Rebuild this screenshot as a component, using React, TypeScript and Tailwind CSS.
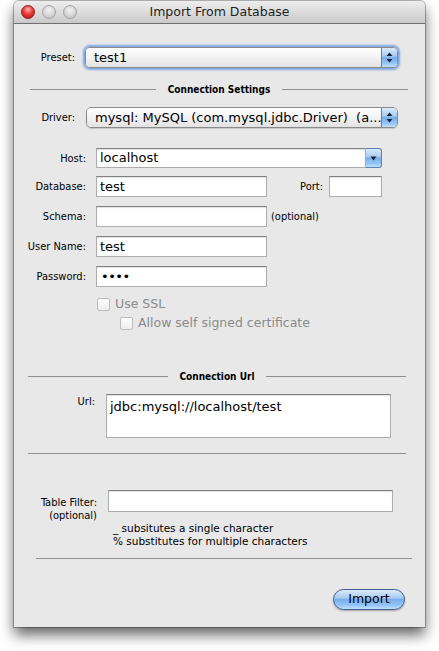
import React from "react";

// Aqua-ish blue used by popup arrows, combo button and the default button.
const AQUA =
  "bg-[linear-gradient(to_bottom,#dceafa_0%,#a9cbf1_42%,#7aaeea_50%,#94c4f6_80%,#c2e1fd_100%)]";

const LABEL = "font-['DejaVu_Sans_Condensed','DejaVu_Sans',sans-serif] text-[11px] leading-[13px] text-black";
const FIELD =
  "h-[21px] border border-[#adadad] border-t-[#808080] bg-white shadow-[inset_0_1px_1px_rgba(0,0,0,0.12)] px-[3px] text-[13px] leading-[19px] text-black";

function UpDown() {
  return (
    <svg width="7" height="11" viewBox="0 0 7 11">
      <path d="M3.5 0.5 L6.5 4 L0.5 4 Z" fill="#16233b" />
      <path d="M0.5 7 L6.5 7 L3.5 10.5 Z" fill="#16233b" />
    </svg>
  );
}

function Popup({ text, focused, width }: { text: string; focused?: boolean; width: string }) {
  return (
    <div
      className={`flex h-[21px] ${width} overflow-hidden rounded-[5px] border border-[#8a8a8a] ${
        focused ? "shadow-[0_0_2px_2px_rgba(92,146,222,0.75)] border-[#5d84bb]" : "shadow-[0_1px_1px_rgba(0,0,0,0.15)]"
      }`}
    >
      <div className="flex min-w-0 flex-1 items-center bg-gradient-to-b from-white via-[#f3f3f3] to-[#e2e2e2] pl-[8px] text-[13px] whitespace-pre text-black">
        <span className="overflow-hidden">{text}</span>
      </div>
      <div className={`flex w-[16px] items-center justify-center border-l border-[#5a7fb5] ${AQUA}`}>
        <UpDown />
      </div>
    </div>
  );
}

function SectionHeader({ title, className }: { title: string; className: string }) {
  return (
    <div className={`flex h-[14px] items-center ${className}`}>
      <div className="h-px flex-1 bg-[#8e8e8e]" />
      <span className="px-[12px] font-['DejaVu_Sans_Condensed','DejaVu_Sans',sans-serif] text-[10px] font-bold text-black">
        {title}
      </span>
      <div className="h-px flex-1 bg-[#8e8e8e]" />
    </div>
  );
}

function Check({ label, indent }: { label: string; indent: string }) {
  return (
    <div className={`flex h-[16px] items-center gap-[5px] ${indent}`}>
      <span className="h-[13px] w-[13px] rounded-[2px] border border-[#bdbdbd] bg-gradient-to-b from-white to-[#ededed]" />
      <span className="text-[12.5px] text-[#8a8a8a]">{label}</span>
    </div>
  );
}

function Row({ label, children, className = "" }: { label: string; children: React.ReactNode; className?: string }) {
  return (
    <div className={`flex items-center ${className}`}>
      <span className={`w-[72px] text-right ${LABEL}`}>{label}</span>
      <div className="ml-[10px] flex items-center">{children}</div>
    </div>
  );
}

export default function App() {
  return (
    <div className="h-[651px] w-[439px] bg-white pl-[14px] pt-[1px] font-['DejaVu_Sans',sans-serif]">
      <div className="flex h-[626px] w-[411px] flex-col overflow-hidden rounded-t-[5px] bg-[#e8e8e8] shadow-[0_0_0_1px_rgba(0,0,0,0.28),0_8px_14px_rgba(0,0,0,0.6)]">
        {/* Title bar */}
        <div className="relative flex h-[23px] shrink-0 items-center gap-[7px] border-b border-[#6f6f6f] bg-gradient-to-b from-[#eeeeee] to-[#cacaca] pl-[7px]">
          <span className="h-[14px] w-[14px] rounded-full border border-[#8e1c1c] bg-[radial-gradient(circle_at_50%_30%,#ffb3b3_0%,#ee3b3b_45%,#b01214_100%)]" />
          <span className="h-[14px] w-[14px] rounded-full border border-[#a3a3a3] bg-[radial-gradient(circle_at_50%_35%,#f2f2f2_0%,#d6d6d6_55%,#b8b8b8_100%)]" />
          <span className="h-[14px] w-[14px] rounded-full border border-[#a3a3a3] bg-[radial-gradient(circle_at_50%_35%,#f2f2f2_0%,#d6d6d6_55%,#b8b8b8_100%)]" />
          <span className="absolute inset-0 flex items-center justify-center text-[12.5px] text-[#1e1e1e]">
            Import From Database
          </span>
        </div>

        {/* Preset */}
        <div className="mt-[23px] flex items-center">
          <span className={`w-[61px] text-right ${LABEL}`}>Preset:</span>
          <div className="ml-[10px]">
            <Popup text="test1" focused width="w-[313px]" />
          </div>
        </div>

        <SectionHeader title="Connection Settings" className="ml-[16px] mt-[14px] w-[378px]" />

        {/* Driver */}
        <div className="mt-[11px] flex items-center">
          <span className={`w-[61px] text-right ${LABEL}`}>Driver:</span>
          <div className="ml-[11px]">
            <Popup text="mysql: MySQL (com.mysql.jdbc.Driver)  (a..." width="w-[312px]" />
          </div>
        </div>

        <Row label="Host:" className="mt-[20px]">
          <div className="flex h-[20px]">
            <div className="h-[20px] w-[270px] border border-[#adadad] border-t-[#808080] bg-white px-[3px] text-[13px] leading-[18px] text-black shadow-[inset_0_1px_1px_rgba(0,0,0,0.12)]">
              localhost
            </div>
            <div className={`flex w-[16px] items-center justify-center rounded-r-[3px] border border-l-0 border-[#5a7fb5] ${AQUA}`}>
              <svg width="7" height="5" viewBox="0 0 7 5">
                <path d="M0.5 0.5 L6.5 0.5 L3.5 4.5 Z" fill="#16233b" />
              </svg>
            </div>
          </div>
        </Row>

        <Row label="Database:" className="mt-[8px]">
          <div className={`w-[171px] ${FIELD}`}>test</div>
          <span className={`w-[56px] text-right ${LABEL}`}>Port:</span>
          <div className={`ml-[6px] w-[53px] ${FIELD}`} />
        </Row>

        <Row label="Schema:" className="mt-[9px]">
          <div className={`w-[171px] ${FIELD}`} />
          <span className={`ml-[4px] ${LABEL}`}>(optional)</span>
        </Row>

        <Row label="User Name:" className="mt-[9px]">
          <div className={`w-[171px] ${FIELD}`}>test</div>
        </Row>

        <Row label="Password:" className="mt-[9px]">
          <div className={`w-[171px] ${FIELD} pl-[4px] tracking-[-0.5px]`}>••••</div>
        </Row>

        <Check label="Use SSL" indent="ml-[83px] mt-[9px]" />
        <Check label="Allow self signed certificate" indent="ml-[106px] mt-[3px]" />

        <SectionHeader title="Connection Url" className="ml-[14px] mt-[38px] w-[378px]" />

        {/* Url */}
        <div className="mt-[11px] flex items-start">
          <span className={`w-[81px] pt-[1px] text-right ${LABEL}`}>Url:</span>
          <div className="ml-[11px] h-[44px] w-[285px] border border-[#adadad] border-t-[#808080] bg-white pl-[3px] pt-[4px] text-[13px] leading-[16px] text-black shadow-[inset_0_1px_1px_rgba(0,0,0,0.12)]">
            jdbc:mysql://localhost/test
          </div>
        </div>

        <div className="ml-[14px] mt-[15px] h-px w-[378px] bg-[#8e8e8e]" />

        {/* Table filter */}
        <div className="mt-[36px] flex items-start">
          <div className={`w-[83px] pt-[6px] text-right ${LABEL}`}>
            <div>Table Filter:</div>
            <div>(optional)</div>
          </div>
          <div className="ml-[11px] flex flex-col">
            <div className={`h-[22px] w-[285px] ${FIELD}`} />
            <div className="mt-[10px] pl-[5px] text-[10.5px] leading-[13px] text-black">
              <div>_ subsitutes a single character</div>
              <div>% substitutes for multiple characters</div>
            </div>
          </div>
        </div>

        <div className="ml-[22px] mt-[10px] h-px w-[376px] bg-[#8e8e8e]" />

        <div className="mt-[30px] flex justify-end pr-[20px]">
          <button
            className={`flex h-[21px] w-[72px] items-center justify-center rounded-full border border-[#3f5f93] text-[12.5px] text-black shadow-[0_1px_2px_rgba(0,0,0,0.3)] ${AQUA}`}
          >
            Import
          </button>
        </div>
      </div>
    </div>
  );
}
